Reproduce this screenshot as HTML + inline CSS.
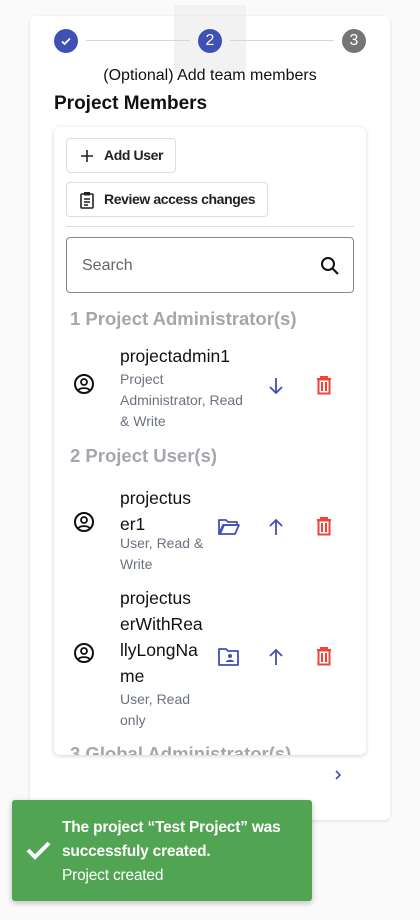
<!DOCTYPE html>
<html><head><meta charset="utf-8"><style>
*{margin:0;padding:0;box-sizing:border-box}
body{width:420px;height:920px;background:#fafafa;font-family:"Liberation Sans",Roboto,sans-serif;position:relative;overflow:hidden;color:#111}
.a{position:absolute}
.card{left:30px;top:16px;width:360px;height:804px;background:#fff;border-radius:6px;box-shadow:0 1px 3px rgba(0,0,0,.12)}
.hl{left:174px;top:5px;width:72px;height:68px;background:#f2f2f2}
.circ{width:24px;height:24px;border-radius:50%;color:#fff;font-size:16px;text-align:center;line-height:24px}
.line{height:1px;background:#d6d6d6;top:40px}
.inner{left:54px;top:127px;width:312px;height:628px;background:#fff;border-radius:6px;box-shadow:0 1px 4px rgba(0,0,0,.18);overflow:hidden}
.btn{border:1px solid #ddd;border-radius:4px;font-size:14px;font-weight:bold;color:#222;height:35px;line-height:33px;padding-left:37px;letter-spacing:-0.4px}
.hd{font-size:18.5px;font-weight:bold;color:#a3a7ad;left:16px}
.nm{font-size:17.5px;line-height:26px;color:#111;left:66px}
.ds{font-size:14px;line-height:21px;color:#6b7280;left:66px}
svg{position:absolute}
</style></head><body>
<div class="a hl"></div>
<div class="a card"></div>
<div class="a hl" style="top:16px;height:57px"></div>
<div class="a circ" style="left:54px;top:29px;background:#3f51b5"><svg width="24" height="24" viewBox="0 0 24 24" style="left:0;top:0"><path d="M8 12.5l2.6 2.5L16 9.5" fill="none" stroke="#fff" stroke-width="1.8"/></svg></div>
<div class="a line" style="left:86px;width:104px"></div>
<div class="a circ" style="left:198px;top:29px;background:#3f51b5">2</div>
<div class="a line" style="left:230px;width:104px"></div>
<div class="a circ" style="left:342px;top:29px;background:#757575">3</div>
<div class="a" style="left:30px;width:360px;top:67px;text-align:center;font-size:16px">(Optional) Add team members</div>
<div class="a" style="left:54px;top:93px;font-size:19px;font-weight:bold">Project Members</div>
<div class="a inner">
 <div class="a btn" style="left:12px;top:11px;width:110px">Add User</div>
 <svg width="14" height="14" style="left:26px;top:22px"><path d="M7 1v12M1 7h12" stroke="#222" stroke-width="1.6"/></svg>
 <div class="a btn" style="left:12px;top:55px;width:202px">Review access changes</div>
 <svg width="16" height="18" viewBox="0 0 16 18" style="left:25px;top:64px"><rect x="2" y="3" width="12" height="14" rx="1" fill="none" stroke="#222" stroke-width="1.6"/><rect x="5" y="1" width="6" height="3.5" fill="#222"/><path d="M5 8h6M5 11h6M5 14h4" stroke="#222" stroke-width="1.4"/></svg>
 <div class="a" style="left:12px;top:99px;width:288px;height:1px;background:#ddd"></div>
 <div class="a" style="left:12px;top:110px;width:288px;height:56px;border:1px solid #888;border-radius:4px;font-size:16px;color:#666;line-height:56px;padding-left:15px">Search</div>
 <svg width="24" height="24" viewBox="0 0 24 24" style="left:264px;top:127px"><circle cx="10" cy="10" r="6" fill="none" stroke="#111" stroke-width="2"/><path d="M14.5 14.5l5.5 5.5" stroke="#111" stroke-width="2.2"/></svg>
 <div class="a hd" style="top:181px">1 Project Administrator(s)</div>
 <div class="a nm" style="top:216px">projectadmin1</div>
 <div class="a ds" style="top:242px">Project<br>Administrator, Read<br>&amp; Write</div>
 <div class="a hd" style="top:318px">2 Project User(s)</div>
 <div class="a nm" style="top:358px">projectus<br>er1</div>
 <div class="a ds" style="top:406px">User, Read &amp;<br>Write</div>
 <div class="a nm" style="top:458px">projectus<br>erWithRea<br>llyLongNa<br>me</div>
 <div class="a ds" style="top:562px">User, Read<br>only</div>
 <div class="a hd" style="top:616px">3 Global Administrator(s)</div>
</div>
<svg width="22" height="22" viewBox="0 0 22 22" style="left:73px;top:373px"><circle cx="11" cy="11" r="9" fill="none" stroke="#111" stroke-width="2"/><circle cx="11" cy="9" r="3" fill="none" stroke="#111" stroke-width="1.8"/><path d="M5.5 17c2-2.5 9-2.5 11 0" fill="none" stroke="#111" stroke-width="1.8"/></svg>
<svg width="22" height="22" viewBox="0 0 22 22" style="left:73px;top:511px"><circle cx="11" cy="11" r="9" fill="none" stroke="#111" stroke-width="2"/><circle cx="11" cy="9" r="3" fill="none" stroke="#111" stroke-width="1.8"/><path d="M5.5 17c2-2.5 9-2.5 11 0" fill="none" stroke="#111" stroke-width="1.8"/></svg>
<svg width="22" height="22" viewBox="0 0 22 22" style="left:73px;top:642px"><circle cx="11" cy="11" r="9" fill="none" stroke="#111" stroke-width="2"/><circle cx="11" cy="9" r="3" fill="none" stroke="#111" stroke-width="1.8"/><path d="M5.5 17c2-2.5 9-2.5 11 0" fill="none" stroke="#111" stroke-width="1.8"/></svg>
<svg width="20" height="20" viewBox="0 0 20 20" style="left:266px;top:376px"><path d="M10 2v15M4 11l6 6 6-6" fill="none" stroke="#3f51b5" stroke-width="1.8"/></svg>
<svg width="20" height="20" viewBox="0 0 20 20" style="left:266px;top:517px"><path d="M10 18V3M4 9l6-6 6 6" fill="none" stroke="#3f51b5" stroke-width="1.8"/></svg>
<svg width="20" height="20" viewBox="0 0 20 20" style="left:266px;top:647px"><path d="M10 18V3M4 9l6-6 6 6" fill="none" stroke="#3f51b5" stroke-width="1.8"/></svg>
<svg width="20" height="20" viewBox="0 0 20 20" style="left:314px;top:375px"><path d="M3 4h14M7 4V2h6v2M4.5 4.5h11V18.5h-11z" fill="none" stroke="#f44336" stroke-width="2"/><path d="M8 7v9M12 7v9" stroke="#f44336" stroke-width="2"/></svg>
<svg width="20" height="20" viewBox="0 0 20 20" style="left:314px;top:516px"><path d="M3 4h14M7 4V2h6v2M4.5 4.5h11V18.5h-11z" fill="none" stroke="#f44336" stroke-width="2"/><path d="M8 7v9M12 7v9" stroke="#f44336" stroke-width="2"/></svg>
<svg width="20" height="20" viewBox="0 0 20 20" style="left:314px;top:646px"><path d="M3 4h14M7 4V2h6v2M4.5 4.5h11V18.5h-11z" fill="none" stroke="#f44336" stroke-width="2"/><path d="M8 7v9M12 7v9" stroke="#f44336" stroke-width="2"/></svg>
<svg width="24" height="20" viewBox="0 0 24 20" style="left:217px;top:517px"><path d="M2 3h7l2 2h9v3H7L3 17H2z" fill="none" stroke="#3f51b5" stroke-width="1.8" stroke-linejoin="round"/><path d="M6 8h16l-4 9H2z" fill="none" stroke="#3f51b5" stroke-width="1.8" stroke-linejoin="round"/></svg>
<svg width="24" height="20" viewBox="0 0 24 20" style="left:217px;top:647px"><path d="M2 2h7l2 2h10v14H2z" fill="none" stroke="#3f51b5" stroke-width="1.8" stroke-linejoin="round"/><circle cx="13" cy="9" r="2" fill="#3f51b5"/><path d="M9 15c0-3 8-3 8 0z" fill="#3f51b5"/></svg>
<svg width="12" height="14" viewBox="0 0 12 14" style="left:332px;top:768px"><path d="M4 3l4 4-4 4" fill="none" stroke="#3f51b5" stroke-width="1.6"/></svg>
<div class="a" style="left:12px;top:800px;width:300px;height:101px;background:#51a552;border-radius:3px;box-shadow:0 2px 6px rgba(0,0,0,.25)"></div>
<svg width="28" height="24" viewBox="0 0 28 24" style="left:25px;top:838px"><path d="M3 12l7 7L24 5" fill="none" stroke="#fff" stroke-width="4"/></svg>
<div class="a" style="left:62px;top:816px;color:#fff;font-size:15.5px;line-height:24px;letter-spacing:-0.2px"><b>The project “Test Project” was<br>successfuly created.</b><br>Project created</div>
</body></html>
